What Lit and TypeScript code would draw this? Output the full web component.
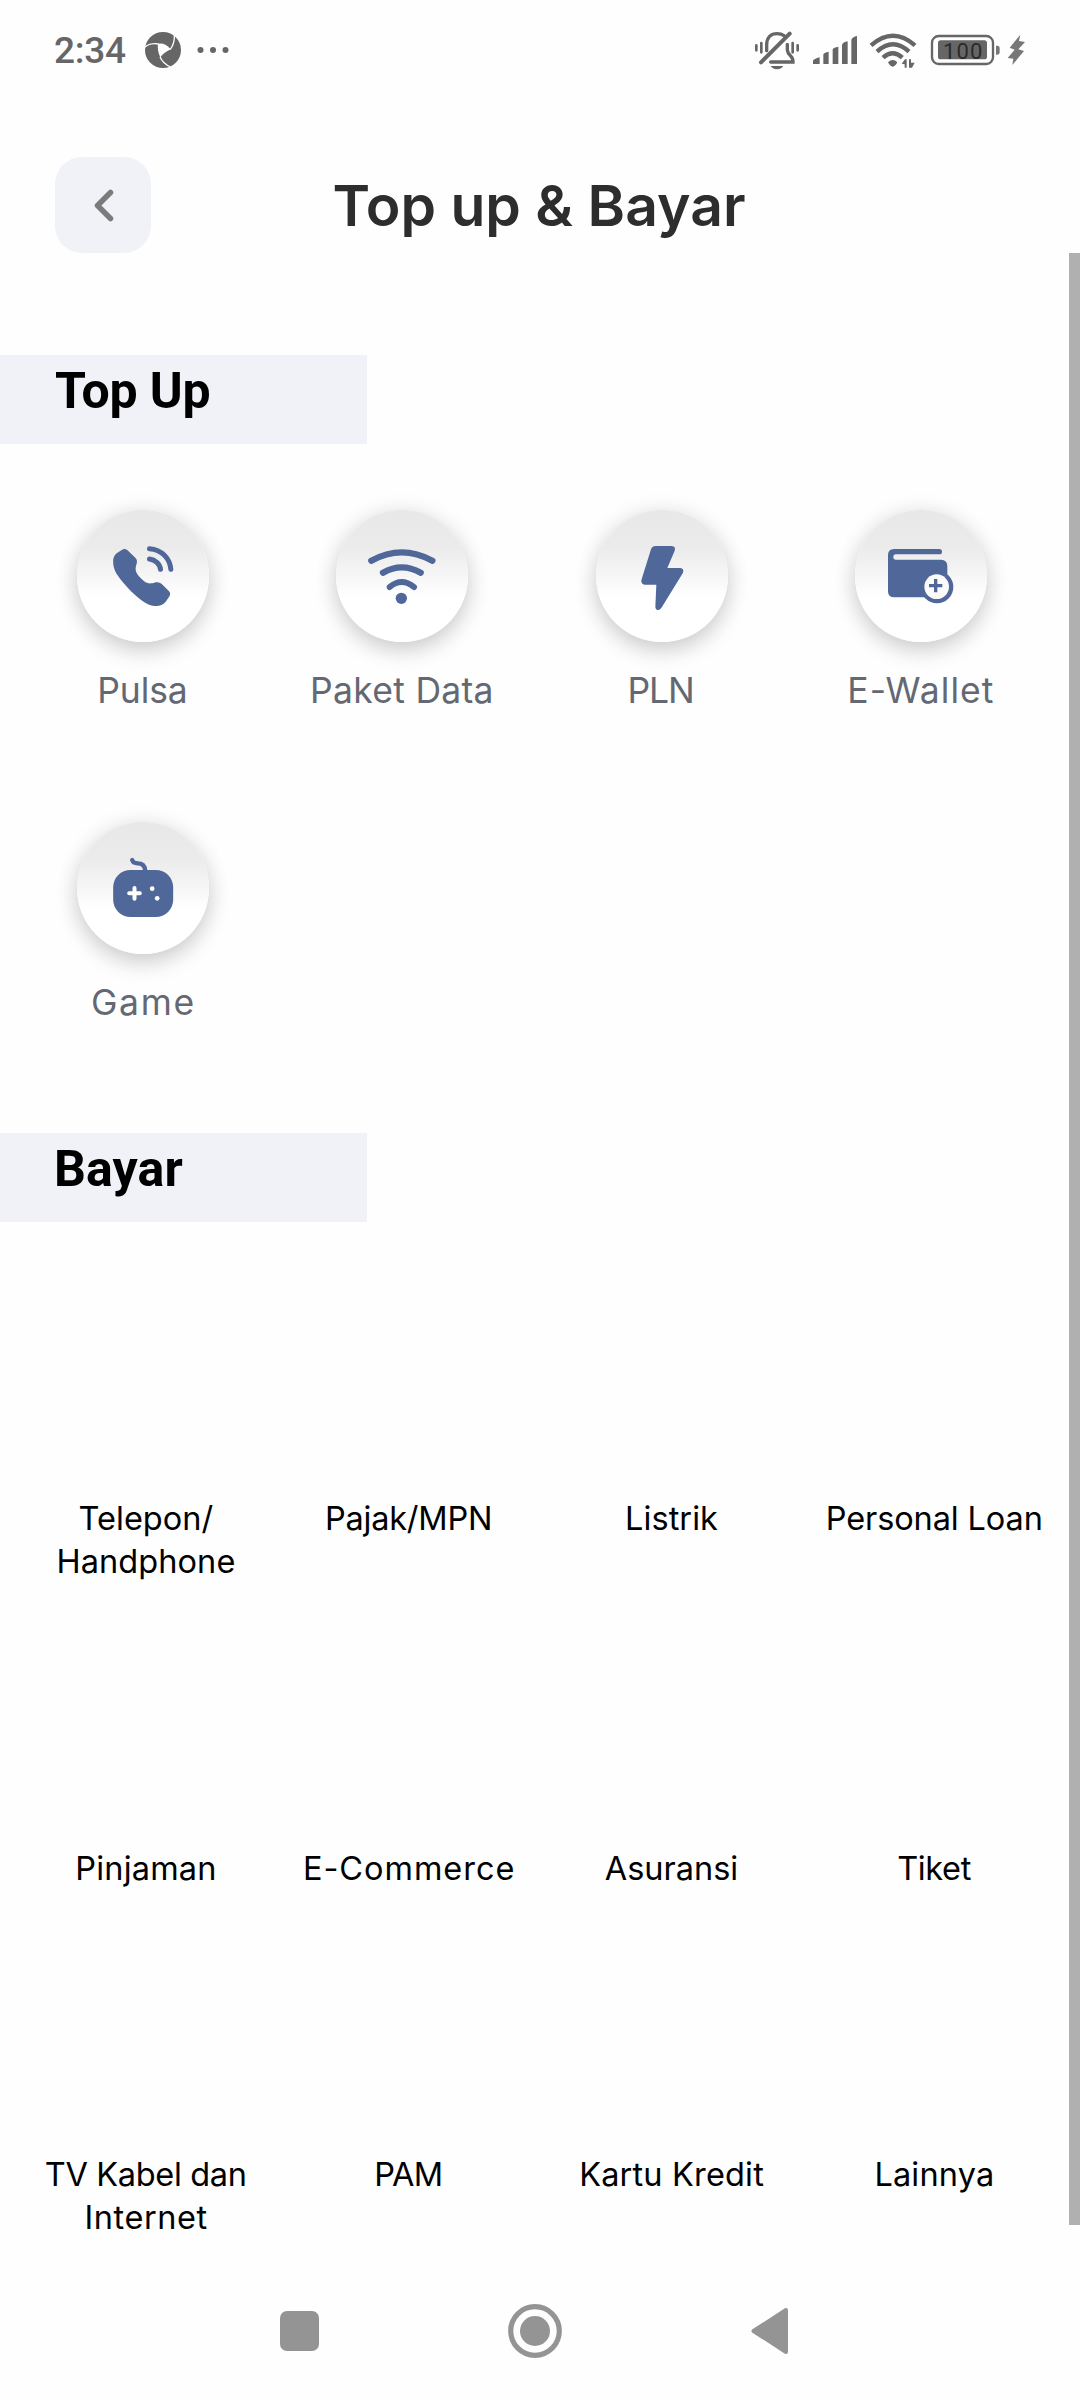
import { LitElement, html, css, svg } from "lit";
import { customElement, property } from "lit/decorators.js";

/* One line of text whose tracking is adjusted so that it spans a given width. */
@customElement("fit-text")
class FitText extends LitElement {
  @property() text = "";
  @property({ type: Number }) span = 0;
  static styles = css`
    :host { display: block; white-space: nowrap; }
  `;
  private spacing() {
    const cs = getComputedStyle(this);
    const ctx = document.createElement("canvas").getContext("2d")!;
    ctx.font = `${cs.fontWeight} ${cs.fontSize} ${cs.fontFamily}`;
    const m = ctx.measureText(this.text);
    const ink = m.actualBoundingBoxRight + m.actualBoundingBoxLeft;
    return (this.span - ink) / Math.max(1, this.text.length - 1);
  }
  render() {
    const s = this.spacing().toFixed(3);
    return html`<span style="letter-spacing:${s}px;margin-right:${-Number(s)}px">${this.text}</span>`;
  }
}

type Line = [string, number];

const BLUE = "#50679a";

const icons: Record<string, unknown> = {
  phone: svg`<svg viewBox="80.5 60 396 396">
    <path fill=${BLUE} d="M189 215C189 200 195 193 204 187L216 179Q224 174 232 181L254 202Q262 209 260 219C253 240 256 248 272 265C288 281 296 284 317 277Q327 275 334 281L356 303Q363 311 357 320L346 336Q334 350 313 348C290 346 262 325 230 290C200 256 189 240 189 215Z"/>
    <path fill="none" stroke=${BLUE} stroke-width="15" stroke-linecap="round" d="M298 176C335 179 359 205 362 238M298 207C315 209 329 222 331 238"/></svg>`,
  wifi: svg`<svg viewBox="857 60 396 396">
    <path fill="none" stroke=${BLUE} stroke-width="19" stroke-linecap="round" d="M963 212Q1054 162 1146 212M998 248Q1054 216 1111 248"/>
    <path fill="none" stroke=${BLUE} stroke-width="18" stroke-linecap="round" d="M1018 291Q1054 261 1091 291"/>
    <circle cx="1053" cy="325" r="17" fill=${BLUE}/></svg>`,
  bolt: svg`<svg viewBox="107 60 396 396">
    <path fill=${BLUE} d="M286 168H334Q347 169 343 182L321 234H360Q372 236 368 248L303 354Q297 362 289 359Q285 356 285 350L288 284H252Q242 282 243 271L272 178Q276 168 286 168Z"/></svg>`,
  wallet: svg`<svg viewBox="885 60 396 396">
    <path fill=${BLUE} d="M1002 177H1138Q1146 177 1146 185Q1146 193 1138 193H1008Q1000 193 1000 201Q1000 209 1008 209H1143Q1162 210 1162 228V300L1110 322H1002Q984 322 984 304V195Q984 177 1002 177Z"/>
    <circle cx="1131" cy="291" r="49" fill=${BLUE}/><circle cx="1130" cy="290" r="37" fill="#fbfbfb"/>
    <path stroke=${BLUE} stroke-width="10" d="M1107 287H1147M1127 267V307"/></svg>`,
  game: svg`<svg viewBox="80.5 66 396 396">
    <rect x="189" y="210" width="180" height="141" rx="52" fill=${BLUE}/>
    <path fill="none" stroke=${BLUE} stroke-width="13" stroke-linecap="round" d="M246 180Q249 190 262 190Q284 190 285 212"/>
    <path stroke="#fff" stroke-width="12" stroke-linecap="round" d="M237 280H269M253 264V296"/>
    <circle cx="306" cy="266" r="7" fill="#fff"/><circle cx="321" cy="295" r="7" fill="#fff"/></svg>`,
};

const topUp: { icon: string; line: Line }[] = [
  { icon: "phone", line: ["Pulsa", 85.5] },
  { icon: "wifi", line: ["Paket Data", 178.5] },
  { icon: "bolt", line: ["PLN", 61.5] },
  { icon: "wallet", line: ["E-Wallet", 142.5] },
  { icon: "game", line: ["Game", 99.5] },
];

const bills: Line[][] = [
  [["Telepon/", 133], ["Handphone", 176]],
  [["Pajak/MPN", 163]],
  [["Listrik", 91]],
  [["Personal Loan", 213]],
  [["Pinjaman", 137]],
  [["E-Commerce", 208.5]],
  [["Asuransi", 131.5]],
  [["Tiket", 72.5]],
  [["TV Kabel dan", 199], ["Internet", 120]],
  [["PAM", 64.5]],
  [["Kartu Kredit", 182]],
  [["Lainnya", 115.5]],
];

@customElement("app-root")
class AppRoot extends LitElement {
  static styles = css`
    :host {
      display: flex; flex-direction: column; position: relative;
      width: 1080px; height: 2400px; overflow: hidden; background: #fefefe;
      font-family: Inter, "Liberation Sans", sans-serif;
    }
    svg { display: block; }
    .status {
      display: flex; justify-content: space-between; height: 157px; flex: none;
      color: #666; font-family: Roboto, sans-serif;
    }
    .left { display: flex; padding-left: 54px; }
    .time { font-size: 37px; line-height: 102px; width: 91px; font-weight: 500; }
    .header {
      display: grid; grid-template-columns: 96px 1fr 96px; align-items: center;
      padding: 0 55px; height: 96px; flex: none;
    }
    .back { width: 96px; height: 96px; border-radius: 27px; background: #f1f2f8; }
    .title {
      font-size: 57px; font-weight: 600; color: #2d2d2d; line-height: 66px;
      text-align: center; padding: 2px 98px 0 96px;
    }
    .band {
      width: 367px; height: 89px; flex: none; box-sizing: border-box; background: #f1f2f8;
      padding: 6px 0 0 55px; font: 700 50px/60px Roboto, sans-serif; color: #000;
    }
    .band.second { padding-left: 54px; }
    .band.first { margin-top: 102px; }
    .tops {
      display: grid; grid-template-columns: repeat(4, 259.3px); grid-auto-rows: 312px;
      padding: 66px 0 0 13.4px; height: 689px; box-sizing: border-box; flex: none;
    }
    .tile { display: flex; flex-direction: column; align-items: center; gap: 26.5px; }
    .disc {
      width: 132px; height: 132px; border-radius: 50%;
      background: linear-gradient(#e8e8e8, #ebebeb 28%, #f4f4f4 46%, #fff 66%);
      box-shadow: 0 9px 22px rgba(0,0,0,.16), 0 1px 24px rgba(0,0,0,.07);
    }
    .label { font-size: 35.5px; line-height: 44px; color: #646872; margin-left: -1px; }
    .bills {
      display: grid; grid-template-columns: repeat(4, 262.8px); grid-template-rows: 350px 306px 94px;
      padding: 275px 0 0 14.5px; flex: none;
    }
    .bill { font-size: 32.5px; line-height: 43px; text-align: center; color: #000; }
    .nav { margin-top: auto; height: 138px; flex: none; }
    .scroll { position: absolute; right: 0; top: 253px; width: 11px; height: 1972px; background: #b0b0b0; }
  `;

  render() {
    return html`
      <div class="status">
        <div class="left">
          <div class="time"><fit-text .text=${"2:34"} .span=${71}></fit-text></div>
          <svg width="95" height="110" viewBox="435 0 285 330">
            <circle cx="489" cy="150" r="54" fill="#666"/>
            <path fill="#fefefe" d="M474 131Q496 127 512 148Q492 157 481 172Q471 152 474 131Z"/>
            <path fill="none" stroke="#fefefe" stroke-width="4" d="M433 142Q450 127 476 132M523 102Q525 130 510 149M480 170Q488 190 512 201"/>
            <g fill="#666"><circle cx="601.500" cy="150" r="9"/><circle cx="639" cy="150" r="9"/><circle cx="676.500" cy="150" r="9"/></g>
          </svg>
        </div>
        <svg width="360" height="110" viewBox="0 0 1080 330">
          <g fill="none" stroke="#666" stroke-width="10" stroke-linecap="round">
            <path d="M140 152V135C140 112 153 101 171 101Q184 101 192 107"/>
            <path d="M202 133V150Q203 160 212 168Q219 174 219 186H152"/>
            <path stroke-width="12" d="M123 187L209 101"/>
            <path stroke-width="8" d="M109 136V151M124 129V157M218 129V157M233 136V151"/>
          </g>
          <g fill="#666">
            <path d="M152 198H190Q183 208 171 208Q159 208 152 198Z"/>
            <path d="M279 182Q281 177 299 172V192H279ZM310 163Q313 157 326 155V192H310ZM338 148Q341 142 355 140V192H338ZM366 134Q369 127 383 124V192H366ZM394 119Q397 111 411 108V192H394Z"/>
            <path d="M504 187Q518 173 532 187Q518 213 504 187Z"/>
            <path d="M545 191L555 178H560V203H554V193ZM567 178H573V188H584L576 203H567Z"/>
          </g>
          <g fill="none" stroke="#666" stroke-width="13" stroke-linecap="butt">
            <path d="M453 136Q519 78 585 136M471 155Q519 111 567 155M489 173Q518 147 547 173"/>
          </g>
          <rect x="636" y="108" width="183" height="84" rx="20" fill="none" stroke="#666" stroke-width="7"/>
          <rect x="654" y="121" width="147" height="57" rx="8" fill="#666"/>
          <path fill="#777" d="M828 137H832Q839 137 839 144V157Q839 164 832 164H828Z"/>
          <text x="669" y="177" font-size="66" fill="#2b2b2b" textLength="118">100</text>
          <path fill="#777" d="M901 104L869 143L884 149L863 174L880 176L877 195L912 153L895 148L915 126L897 123Z"/>
        </svg>
      </div>
      <div class="header">
        <div class="back">
          <svg width="96" height="96" viewBox="0 0 96 96"><path d="M55.500 35.500L42.500 48.500L55.500 61.500" fill="none" stroke="#7b7b7b" stroke-width="5.500" stroke-linecap="round" stroke-linejoin="round"/></svg>
        </div>
        <div class="title"><fit-text .text=${"Top up & Bayar"} .span=${410.5}></fit-text></div>
      </div>
      <div class="band first"><fit-text .text=${"Top Up"} .span=${153.5}></fit-text></div>
      <div class="tops">
        ${topUp.map(
          (t) => html`<div class="tile">
            <div class="disc">${icons[t.icon]}</div>
            <fit-text class="label" .text=${t.line[0]} .span=${t.line[1]}></fit-text>
          </div>`
        )}
      </div>
      <div class="band second"><fit-text .text=${"Bayar"} .span=${125.5}></fit-text></div>
      <div class="bills">
        ${bills.map(
          (b) => html`<div class="bill">
            ${b.map((l) => html`<fit-text .text=${l[0]} .span=${l[1]}></fit-text>`)}
          </div>`
        )}
      </div>
      <div class="nav">
        <svg width="1080" height="138" viewBox="0 2262 1080 138" fill="#949494">
          <rect x="280" y="2311" width="39" height="40" rx="7"/>
          <circle cx="535" cy="2331" r="24.300" fill="none" stroke="#949494" stroke-width="5.200"/>
          <circle cx="535" cy="2331" r="15"/>
          <path d="M753.500 2331L786 2310V2352Z" stroke="#949494" stroke-width="4" stroke-linejoin="round"/>
        </svg>
      </div>
      <div class="scroll"></div>
    `;
  }
}
